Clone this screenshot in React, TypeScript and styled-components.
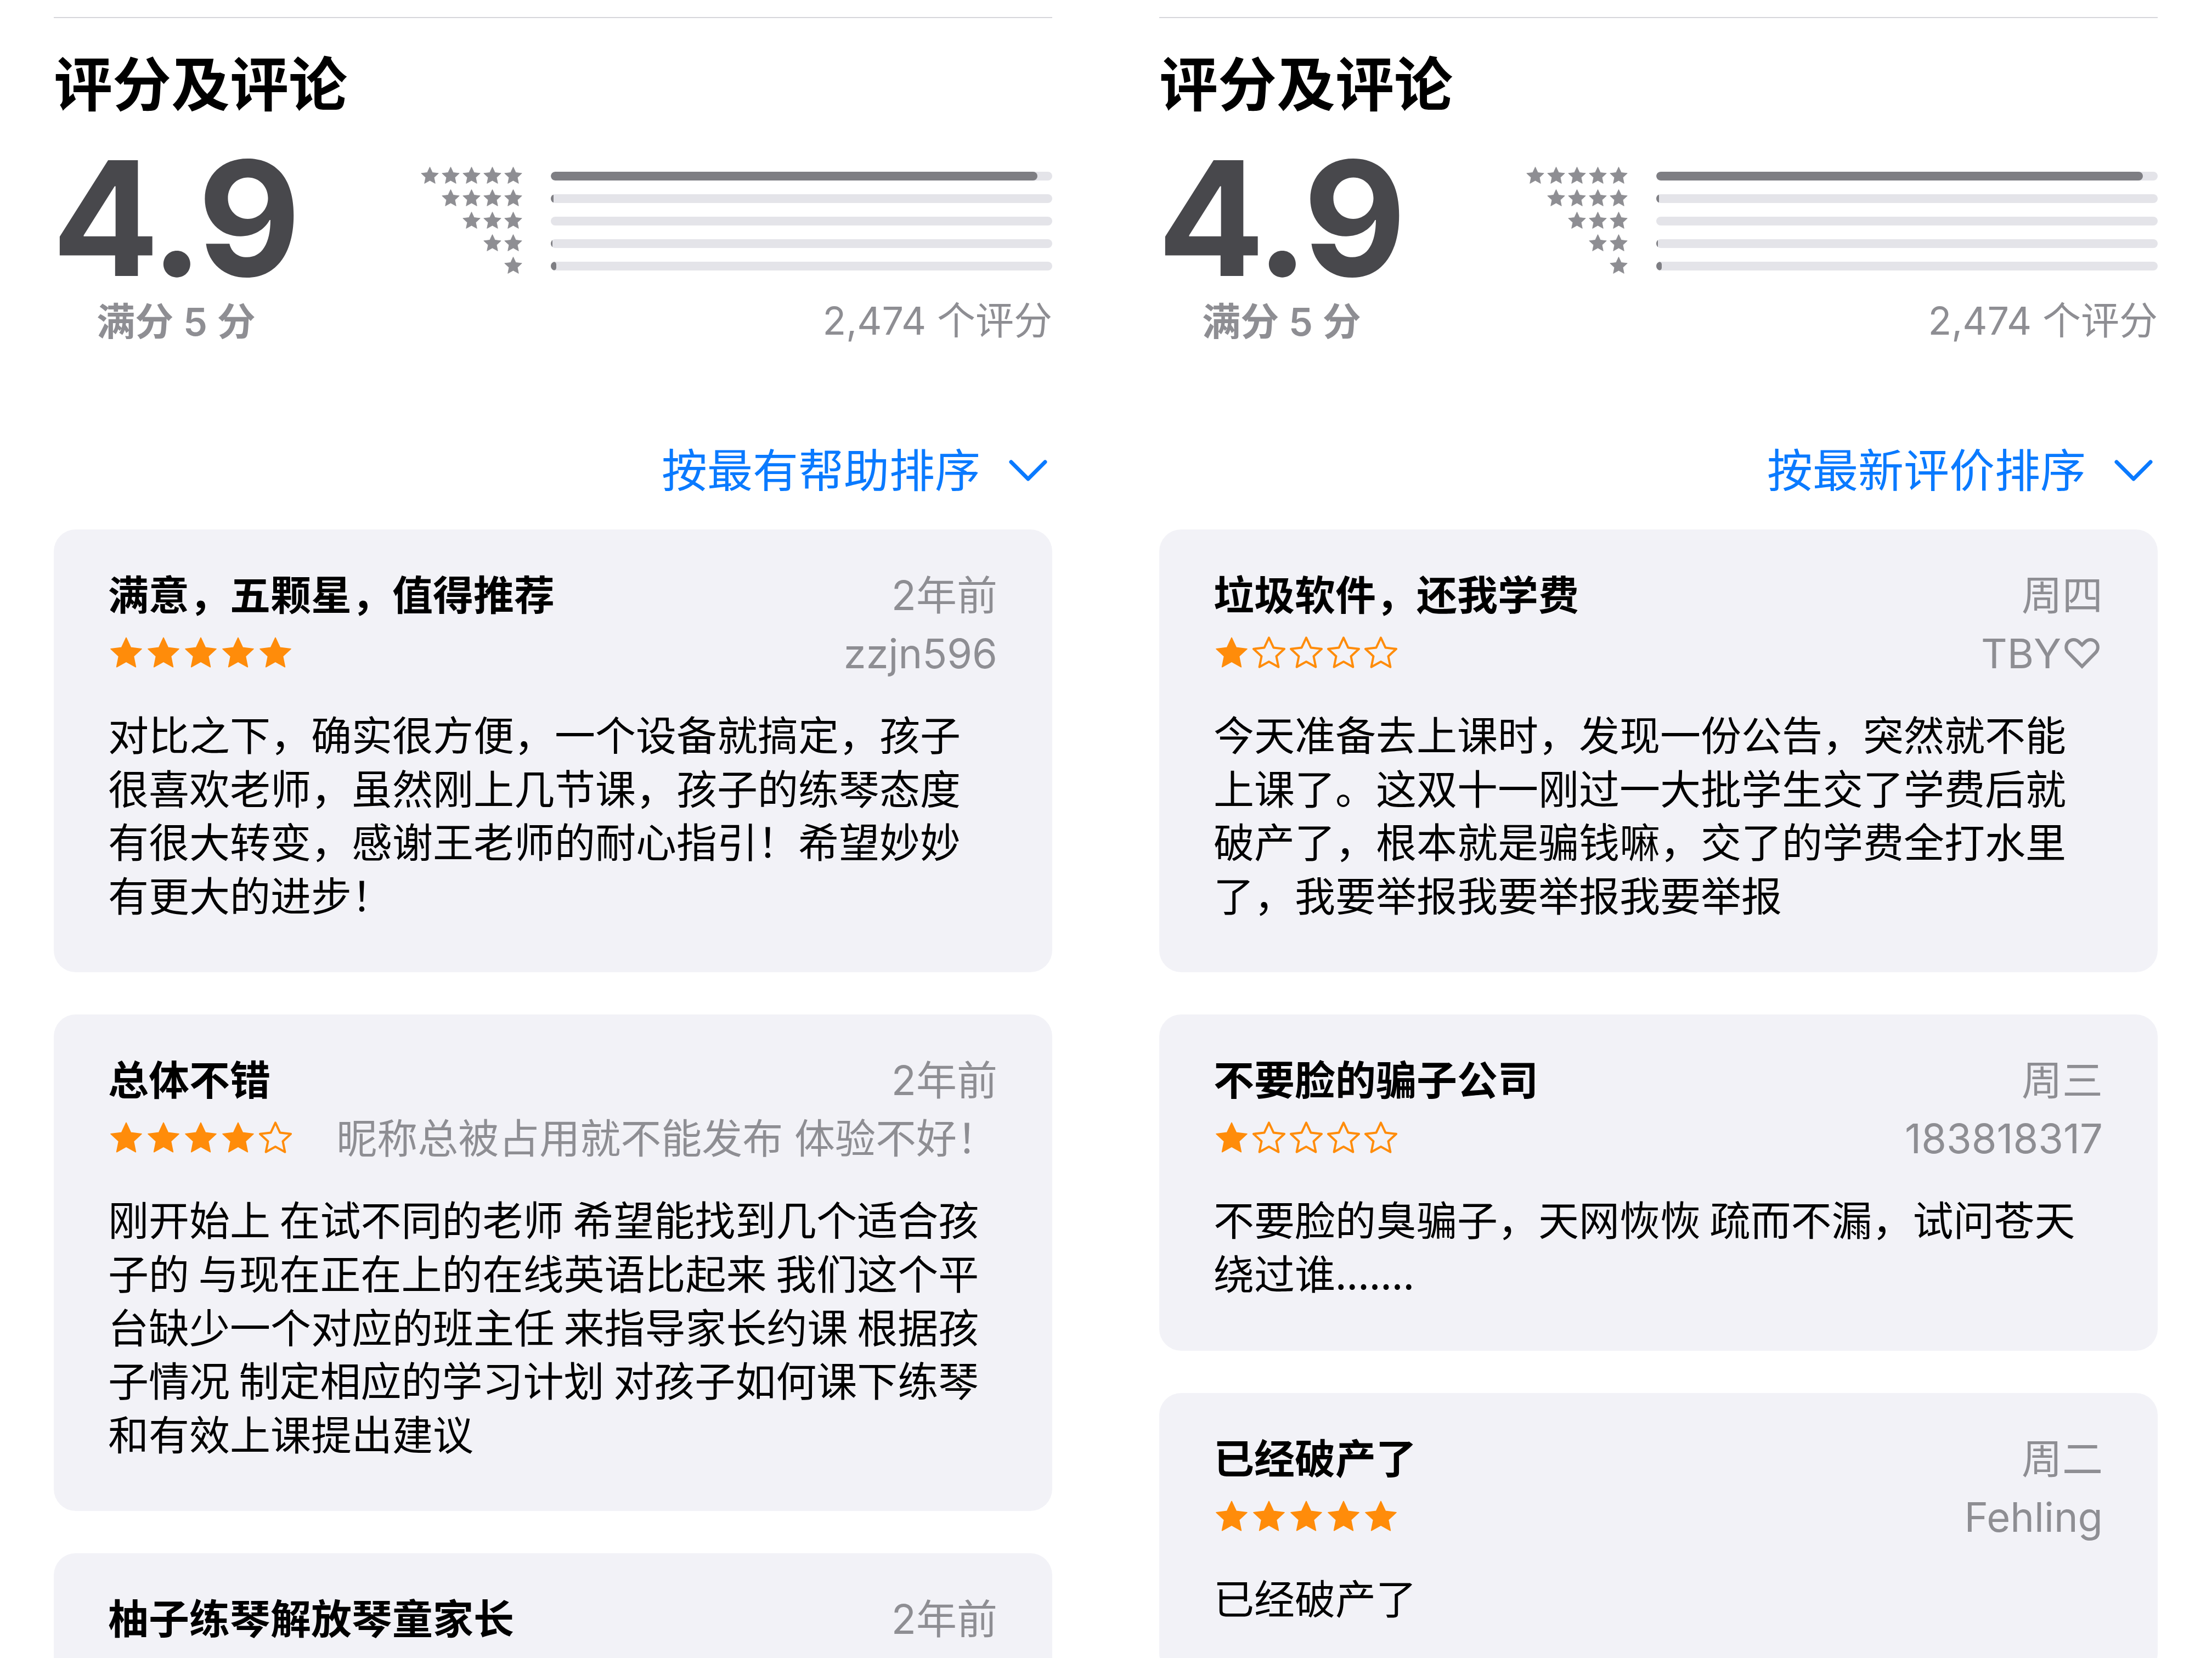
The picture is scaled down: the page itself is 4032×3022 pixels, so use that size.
import React from "react";
import styled, { createGlobalStyle } from "styled-components";

const Global = createGlobalStyle`
  html, body { margin: 0; padding: 0; background: #ffffff; }
  body {
    width: 4032px;
    height: 3022px;
    overflow: hidden;
    font-family: "Inter", "Noto Sans CJK SC", sans-serif;
    -webkit-font-smoothing: antialiased;
  }
`;

const Page = styled.div`
  display: grid;
  grid-template-columns: 1820px 1820px;
  column-gap: 195px;
  padding: 0 98px;
  height: 3022px;
  overflow: hidden;
  box-sizing: border-box;
`;

const Column = styled.section`
  display: flex;
  flex-direction: column;
  min-width: 0;
`;

const Divider = styled.div`
  height: 2px;
  background: #d6d6da;
  margin-top: 31px;
`;

const SectionTitle = styled.h2`
  margin: 49px 0 0;
  font-family: "Noto Sans CJK SC", sans-serif;
  font-size: 107px;
  line-height: 130px;
  font-weight: 700;
  color: #000;
`;

const RatingRow = styled.div`
  display: flex;
  align-items: flex-start;
  margin-top: 41px;
`;

const ScoreBlock = styled.div`
  width: 446px;
  display: flex;
  flex-direction: column;
  align-items: center;
`;

const ScoreNumber = styled.div`
  font-family: "Inter", sans-serif;
  font-size: 290px;
  line-height: 240px;
  margin-top: 25px;
  margin-left: -6px;
  font-weight: 700;
  letter-spacing: -7px;
  color: #48484c;
`;

const GrayLabel = styled.div<{ $bold?: boolean }>`
  font-size: 70px;
  line-height: 84px;
  font-weight: ${(p) => (p.$bold ? 600 : 400)};
  color: #8e8e93;
  white-space: nowrap;
`;

const OutOfLabel = styled(GrayLabel)`
  margin-top: 27px;
`;

const HistogramBlock = styled.div`
  flex: 1;
  display: flex;
  flex-direction: column;
  align-items: stretch;
  padding-top: 47px;
`;

const Histogram = styled.div`
  display: grid;
  grid-template-columns: 1fr 914px;
  grid-auto-rows: 41px;
  column-gap: 50px;
  align-items: center;
`;

const StarCell = styled.div`
  justify-self: end;
  display: flex;
  gap: 1px;
`;

const Track = styled.div`
  height: 16px;
  border-radius: 8px;
  background: #e4e4e9;
  overflow: hidden;
  display: flex;
`;

const Fill = styled.div`
  height: 100%;
  border-radius: 8px;
  background: #7e7e83;
`;

const CountLabel = styled(GrayLabel)`
  margin-top: 38px;
  text-align: right;
`;

const SortRow = styled.div`
  margin-top: 179px;
  display: flex;
  justify-content: flex-end;
  align-items: center;
  gap: 52px;
  padding-right: 9px;
  color: #0a7aff;
  font-size: 83px;
  line-height: 100px;
`;

const CardList = styled.div`
  margin-top: 57px;
  display: flex;
  flex-direction: column;
  gap: 77px;
`;

const Card = styled.article`
  background: #f2f2f7;
  border-radius: 40px;
  padding: 71px 100px 95px 99px;
`;

const CardHead = styled.div`
  display: flex;
  justify-content: space-between;
  align-items: baseline;
  font-size: 74px;
  line-height: 88px;
`;

const CardTitle = styled.div`
  font-weight: 700;
  color: #000;
  font-family: "Noto Sans CJK SC", sans-serif;
`;

const DateText = styled.div`
  color: #8e8e93;
  font-weight: 400;
`;

const MetaRow = styled.div`
  margin-top: 18px;
  height: 88px;
  display: flex;
  justify-content: space-between;
  align-items: center;
  gap: 30px;
`;

const StarRow = styled.div`
  display: flex;
  gap: 2px;
  flex-shrink: 0;
`;

const Author = styled.div`
  font-size: 74px;
  line-height: 88px;
  color: #8e8e93;
  white-space: nowrap;
`;

const Body = styled.p`
  margin: 52px 0 0;
  font-size: 74px;
  line-height: 97.6px;
  color: #000;
  font-family: "Noto Sans CJK SC", sans-serif;
`;

const STAR_PATH =
  "M12 1.6l3.05 6.55 7.15.85-5.3 4.9 1.42 7.08L12 17.45l-6.32 3.53 1.42-7.08-5.3-4.9 7.15-.85z";

function Star({ size, color, filled }: { size: number; color: string; filled: boolean }) {
  return (
    <svg width={size} height={size} viewBox="0 0 24 24" aria-hidden>
      <path
        d={STAR_PATH}
        fill={filled ? color : "none"}
        stroke={color}
        strokeWidth={filled ? 0.6 : 1.45}
        strokeLinejoin="round"
      />
    </svg>
  );
}

function Chevron() {
  return (
    <svg width="70" height="40" viewBox="0 0 70 40" aria-hidden>
      <polyline
        points="4,4 35,35 66,4"
        fill="none"
        stroke="#0a7aff"
        strokeWidth="7"
        strokeLinecap="round"
        strokeLinejoin="round"
      />
    </svg>
  );
}

type Review = {
  title: string;
  date: string;
  stars?: number;
  author?: string;
  body?: string;
};

type SectionData = {
  sort: string;
  reviews: Review[];
};

const histogram = [
  { stars: 5, pct: 97 },
  { stars: 4, pct: 0.5 },
  { stars: 3, pct: 0 },
  { stars: 2, pct: 0.35 },
  { stars: 1, pct: 1.1 },
];

const sections: SectionData[] = [
  {
    sort: "按最有帮助排序",
    reviews: [
      {
        title: "满意，五颗星，值得推荐",
        date: "2年前",
        stars: 5,
        author: "zzjn596",
        body:
          "对比之下，确实很方便，一个设备就搞定，孩子很喜欢老师，虽然刚上几节课，孩子的练琴态度有很大转变，感谢王老师的耐心指引！希望妙妙有更大的进步！",
      },
      {
        title: "总体不错",
        date: "2年前",
        stars: 4,
        author: "昵称总被占用就不能发布 体验不好！",
        body:
          "刚开始上 在试不同的老师 希望能找到几个适合孩子的 与现在正在上的在线英语比起来 我们这个平台缺少一个对应的班主任 来指导家长约课 根据孩子情况 制定相应的学习计划 对孩子如何课下练琴和有效上课提出建议",
      },
      {
        title: "柚子练琴解放琴童家长",
        date: "2年前",
      },
    ],
  },
  {
    sort: "按最新评价排序",
    reviews: [
      {
        title: "垃圾软件，还我学费",
        date: "周四",
        stars: 1,
        author: "TBY♡",
        body:
          "今天准备去上课时，发现一份公告，突然就不能上课了。这双十一刚过一大批学生交了学费后就破产了，根本就是骗钱嘛，交了的学费全打水里了，我要举报我要举报我要举报",
      },
      {
        title: "不要脸的骗子公司",
        date: "周三",
        stars: 1,
        author: "183818317",
        body: "不要脸的臭骗子，天网恢恢 疏而不漏，试问苍天绕过谁.......",
      },
      {
        title: "已经破产了",
        date: "周二",
        stars: 5,
        author: "Fehling",
        body: "已经破产了",
      },
    ],
  },
];

function ReviewCard({ r }: { r: Review }) {
  return (
    <Card>
      <CardHead>
        <CardTitle>{r.title}</CardTitle>
        <DateText>{r.date}</DateText>
      </CardHead>
      {r.stars !== undefined && (
        <MetaRow>
          <StarRow>
            {[0, 1, 2, 3, 4].map((i) => (
              <Star key={i} size={66} color="#ff8c0a" filled={i < (r.stars as number)} />
            ))}
          </StarRow>
          <Author>{r.author}</Author>
        </MetaRow>
      )}
      {r.body && <Body>{r.body}</Body>}
    </Card>
  );
}

function Section({ data }: { data: SectionData }) {
  return (
    <Column>
      <Divider />
      <SectionTitle>评分及评论</SectionTitle>
      <RatingRow>
        <ScoreBlock>
          <ScoreNumber>4.9</ScoreNumber>
          <OutOfLabel $bold>满分 5 分</OutOfLabel>
        </ScoreBlock>
        <HistogramBlock>
          <Histogram>
            {histogram.map((h) => (
              <React.Fragment key={h.stars}>
                <StarCell>
                  {Array.from({ length: h.stars }).map((_, i) => (
                    <Star key={i} size={37} color="#8e8e93" filled />
                  ))}
                </StarCell>
                <Track>
                  <Fill style={{ width: `${h.pct}%` }} />
                </Track>
              </React.Fragment>
            ))}
          </Histogram>
          <CountLabel>2,474 个评分</CountLabel>
        </HistogramBlock>
      </RatingRow>
      <SortRow>
        <span>{data.sort}</span>
        <Chevron />
      </SortRow>
      <CardList>
        {data.reviews.map((r, i) => (
          <ReviewCard key={i} r={r} />
        ))}
      </CardList>
    </Column>
  );
}

export default function App() {
  return (
    <>
      <Global />
      <Page>
        {sections.map((s, i) => (
          <Section key={i} data={s} />
        ))}
      </Page>
    </>
  );
}
